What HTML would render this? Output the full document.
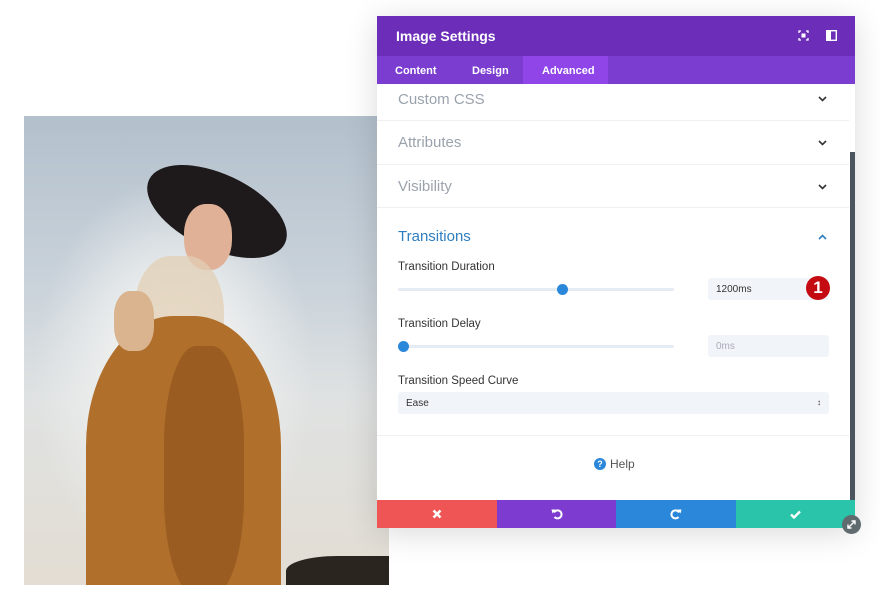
<!DOCTYPE html>
<html><head><meta charset="utf-8"><style>
*{margin:0;padding:0;box-sizing:border-box}
body{width:880px;height:602px;background:#fff;position:relative;overflow:hidden;font-family:"Liberation Sans",sans-serif}
.abs{position:absolute}
.photo{left:24px;top:116px;width:365px;height:469px;background:radial-gradient(ellipse 140px 200px at 150px 260px,#ffffff 0%,#eef0ef 40%,rgba(220,226,230,0) 100%),linear-gradient(180deg,#b3c0cc 0%,#c9d2da 35%,#dfe2e2 60%,#e3ddd3 100%);overflow:hidden}
.panel{left:377px;top:16px;width:478px;height:512px;background:#fff;box-shadow:0 5px 30px rgba(0,0,0,.15)}
.hdr{left:0;top:0;width:478px;height:40px;background:#6c2eb9;color:#fff;font-weight:bold;font-size:14px;padding:12px 19px}
.tabs{left:0;top:40px;width:478px;height:28px;background:#7b3dcf;color:#fff;font-size:11px;font-weight:bold}
.tabs span{position:absolute;top:9px}
.sec{left:21px;font-size:15px;color:#9aa3ad}
.line{left:0;width:472px;height:1px;background:#eef0f2}
.chev{left:441px}
.lbl{left:21px;font-size:11.5px;color:#333}
.track{left:21px;width:276px;height:3px;background:#e5ebf2;border-radius:2px}
.dot{width:11px;height:11px;border-radius:50%;background:#2b87da}
.inp{left:331px;width:121px;height:22px;background:#f1f4f8;border-radius:3px;font-size:10px;color:#333;padding:6px 8px}
.btn{top:484px;height:28px;width:120px;display:flex;align-items:center;justify-content:center}
</style></head><body>
<div class="abs photo">
  <div class="abs" style="left:118px;top:58px;width:150px;height:75px;border-radius:50%;background:#1e1a1c;transform:rotate(25deg)"></div>
  <div class="abs" style="left:160px;top:88px;width:48px;height:66px;border-radius:45%;background:#e0b196"></div>
  <div class="abs" style="left:110px;top:140px;width:90px;height:140px;background:#e2cfb4;border-radius:40%;opacity:.75"></div>
  <div class="abs" style="left:62px;top:200px;width:195px;height:290px;background:#b06f2b;border-radius:45% 45% 0 0"></div>
  <div class="abs" style="left:140px;top:230px;width:80px;height:250px;background:#9a5c20;border-radius:40%"></div>
  <div class="abs" style="left:90px;top:175px;width:40px;height:60px;background:#d9b48e;border-radius:40%"></div>
  <div class="abs" style="left:262px;top:440px;width:103px;height:30px;background:#2b2520;border-radius:50% 0 0 0"></div>
</div>
<div class="abs panel">
  <div class="abs hdr">Image Settings
    <svg class="abs" style="left:421px;top:14px" width="11" height="11" viewBox="0 0 11 11" fill="none" stroke="#fff" stroke-width="1.3"><path d="M1 3V1h2M8 1h2v2M10 8v2H8M3 10H1V8"/><rect x="3.5" y="3.5" width="4" height="4" fill="#fff" stroke="none"/></svg>
    <svg class="abs" style="left:449px;top:14px" width="11" height="11" viewBox="0 0 11 11"><rect x="0.7" y="0.7" width="9.6" height="9.6" fill="none" stroke="#fff" stroke-width="1.4"/><rect x="1" y="1" width="4" height="9" fill="#fff"/></svg>
  </div>
  <div class="abs tabs">
    <span style="left:18px">Content</span><span style="left:95px">Design</span>
    <div class="abs" style="left:146px;top:0;width:85px;height:28px;background:#8f45e8"></div>
    <span style="left:165px">Advanced</span>
  </div>
  <div class="abs sec" style="top:75px">Custom CSS</div>
  <svg class="abs chev" style="top:80px" width="9" height="6" viewBox="0 0 9 6"><path d="M1 1l3.5 3.5L8 1" fill="none" stroke="#333" stroke-width="1.6"/></svg>
  <div class="abs line" style="top:104px"></div>
  <div class="abs sec" style="top:118px">Attributes</div>
  <svg class="abs chev" style="top:124px" width="9" height="6" viewBox="0 0 9 6"><path d="M1 1l3.5 3.5L8 1" fill="none" stroke="#333" stroke-width="1.6"/></svg>
  <div class="abs line" style="top:148px"></div>
  <div class="abs sec" style="top:162px">Visibility</div>
  <svg class="abs chev" style="top:168px" width="9" height="6" viewBox="0 0 9 6"><path d="M1 1l3.5 3.5L8 1" fill="none" stroke="#333" stroke-width="1.6"/></svg>
  <div class="abs line" style="top:191px"></div>
  <div class="abs sec" style="top:212px;color:#2e7ec0">Transitions</div>
  <svg class="abs chev" style="top:218px" width="9" height="6" viewBox="0 0 9 6"><path d="M1 5l3.5-3.5L8 5" fill="none" stroke="#2e7ec0" stroke-width="1.6"/></svg>
  <div class="abs lbl" style="top:245px">Transition Duration</div>
  <div class="abs track" style="top:272px"></div><div class="abs dot" style="left:180px;top:268px"></div>
  <div class="abs inp" style="top:262px">1200ms</div>
  <div class="abs" style="left:429px;top:260px;width:24px;height:24px;border-radius:50%;background:#c40b12;color:#fff;font-weight:bold;font-size:17px;text-align:center;line-height:24px">1</div>
  <div class="abs lbl" style="top:302px">Transition Delay</div>
  <div class="abs track" style="top:329px"></div><div class="abs dot" style="left:21px;top:325px"></div>
  <div class="abs inp" style="top:319px;color:#aab">0ms</div>
  <div class="abs lbl" style="top:359px">Transition Speed Curve</div>
  <div class="abs inp" style="left:21px;width:431px;top:376px">Ease<span style="float:right;font-size:8px">&#8597;</span></div>
  <div class="abs line" style="top:419px"></div>
  <div class="abs" style="left:217px;top:441px;font-size:12px;color:#555;display:flex;align-items:center;gap:4px"><span style="display:inline-block;width:12px;height:12px;border-radius:50%;background:#2b87da;color:#fff;font-size:9px;font-weight:bold;text-align:center;line-height:12px">?</span>Help</div>
  <div class="abs" style="left:473px;top:136px;width:5px;height:348px;background:#4a5560"></div>
  <div class="abs btn" style="left:0;background:#ef5555"><svg width="10" height="10" viewBox="0 0 10 10"><path d="M1.5 1.5l7 7M8.5 1.5l-7 7" stroke="#fff" stroke-width="2.6"/></svg></div>
  <div class="abs btn" style="left:120px;background:#7d3bcf"><svg width="12" height="12" viewBox="0 0 12 12"><path d="M3 4.5A4 4 0 1 1 3.5 9" fill="none" stroke="#fff" stroke-width="2"/><path d="M0.5 1.5L4.5 1.5L1.5 5.5Z" fill="#fff"/></svg></div>
  <div class="abs btn" style="left:239px;background:#2b87da"><svg width="12" height="12" viewBox="0 0 12 12"><path d="M9 4.5A4 4 0 1 0 8.5 9" fill="none" stroke="#fff" stroke-width="2"/><path d="M11.5 1.5L7.5 1.5L10.5 5.5Z" fill="#fff"/></svg></div>
  <div class="abs btn" style="left:359px;width:119px;background:#29c4a9"><svg width="11" height="9" viewBox="0 0 11 9"><path d="M1 4.5l3 3L10 1.5" fill="none" stroke="#fff" stroke-width="2.4"/></svg></div>
</div>
<div class="abs" style="left:842px;top:515px;width:19px;height:19px;border-radius:50%;background:#5f6b6f"><svg class="abs" style="left:4px;top:4px" width="11" height="11" viewBox="0 0 11 11"><path d="M2 9L9 2M2 5.5V9h3.5M9 5.5V2H5.5" fill="none" stroke="#fff" stroke-width="1.4"/></svg></div>
</body></html>
